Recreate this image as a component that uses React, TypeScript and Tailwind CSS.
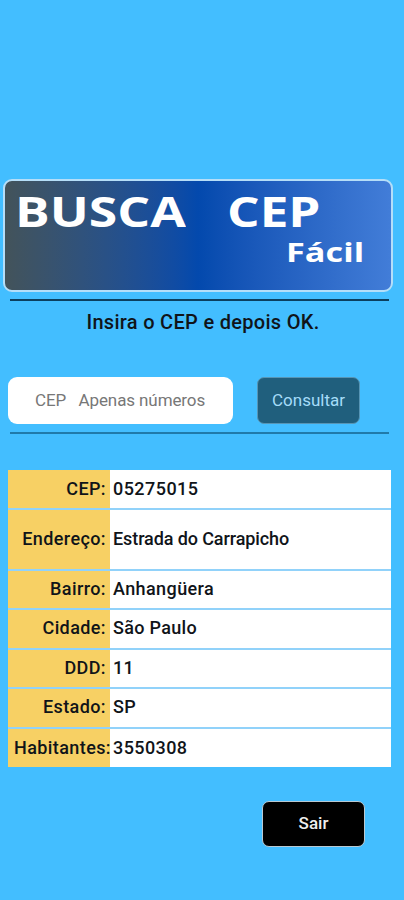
import { useState } from "react";

const rows = [
  { label: "CEP:", value: "05275015", size: "h-[38px]", gap: "mb-[2px]", spacing: "tracking-[0.45px]", align: "pr-[4px]" },
  { label: "Endereço:", value: "Estrada do Carrapicho", size: "h-[59px]", gap: "mb-[2px]", spacing: "tracking-[-0.1px] pb-[2px]", align: "pr-[4px] pb-px" },
  { label: "Bairro:", value: "Anhangüera", size: "h-[37px]", gap: "mb-[2px]", spacing: "tracking-[0.4px] pb-[2px]", align: "pr-[4px] pb-[2px]" },
  { label: "Cidade:", value: "São Paulo", size: "h-[38px]", gap: "mb-[2px]", spacing: "tracking-[0.3px] pb-[2px]", align: "pr-[4px] pb-[2px]" },
  { label: "DDD:", value: "11", size: "h-[37px]", gap: "mb-[2px]", spacing: "tracking-[0.3px] pb-[2px]", align: "pr-[4px] pb-[2px]" },
  { label: "Estado:", value: "SP", size: "h-[38px]", gap: "mb-[2px]", spacing: "tracking-[0.3px] pb-[2px]", align: "pr-[4px] pb-[2px]" },
  { label: "Habitantes:", value: "3550308", size: "h-[38px]", gap: "", spacing: "tracking-[0.4px]", align: "-mr-[2px] pr-px" },
];

function Banner() {
  return (
    <header className="ml-[3px] h-[113px] w-[390px] rounded-[9px] border-2 border-[#b5def8] bg-linear-to-r from-[#43535a] via-[#0349ad] to-[#427dd8] font-['Open_Sans',sans-serif] font-bold text-white">
      <h1 className="flex h-[60px] items-center text-[42px] leading-[60px]">
        <span className="ml-[10px] w-[212px] origin-left scale-x-[1.23]">BUSCA</span>
        <span className="origin-left scale-x-[1.22]">CEP</span>
      </h1>
      <p className="-mt-[2px] ml-[281px] h-[26px] w-[62px] origin-left scale-x-[1.27] text-[27px] leading-[26px]">
        Fácil
      </p>
    </header>
  );
}

export default function App() {
  const [cep, setCep] = useState("");

  return (
    <main className="h-[900px] w-[404px] overflow-hidden bg-[#43beff] pt-[179px] font-['Roboto',sans-serif] text-[#101419]">
      <Banner />
      <hr className="ml-[10px] mt-[7px] w-[379px] border-t-2 border-[#0b3f5e]" />
      <p className="mt-[7px] h-[28px] pl-[2px] text-center text-xl font-medium leading-[28px] tracking-[0.3px]">
        Insira o CEP e depois OK.
      </p>
      <form
        className="ml-[8px] mt-[41px] flex items-center"
        onSubmit={(e) => e.preventDefault()}
      >
        <input
          className="h-[47px] w-[225px] rounded-[9px] bg-white pb-[2px] pl-[27px] text-[17px] tracking-[-0.1px] outline-none placeholder:text-[#777]"
          placeholder={"CEP\u00a0\u00a0 Apenas números"}
          inputMode="numeric"
          value={cep}
          onChange={(e) => setCep(e.target.value)}
        />
        <button className="ml-[24px] h-[47px] w-[103px] rounded-[7px] border border-[#5795b5] bg-[#205f7d] text-[17px] text-[#a5dcf8]">
          Consultar
        </button>
      </form>
      <hr className="ml-[10px] mt-[8px] w-[379px] border-t-2 border-[#207aaa]" />
      <dl className="ml-[8px] mt-[36px] w-[383px] text-lg font-medium">
        {rows.map((row) => (
          <div key={row.label} className={`flex ${row.size} ${row.gap} shadow-[0_2px_0_#91d2fa] last:shadow-none`}>
            <dt className="flex w-[102px] shrink-0 bg-[#f7d064]">
              <span
                className={`flex flex-1 items-center justify-end whitespace-nowrap tracking-[0.4px] ${row.align}`}
              >
                {row.label}
              </span>
            </dt>
            <dd className={`flex flex-1 items-center bg-white pl-[3px] ${row.spacing}`}>
              {row.value}
            </dd>
          </div>
        ))}
      </dl>
      <button className="ml-[262px] mt-[34px] block h-[46px] w-[103px] rounded-[7px] border border-[#b9c9d2] bg-black text-[17px] font-medium text-[#eee]">
        Sair
      </button>
    </main>
  );
}
